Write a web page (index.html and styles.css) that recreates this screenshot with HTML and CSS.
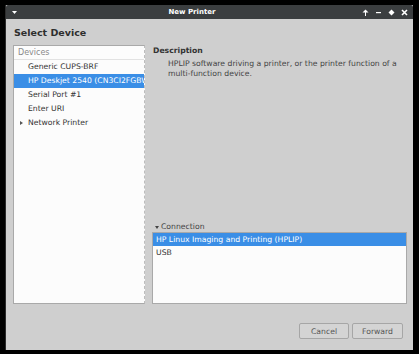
FILE: index.html
```html
<!DOCTYPE html>
<html lang="en">
<head>
<meta charset="UTF-8" />
<title>New Printer</title>
<link rel="stylesheet" href="styles.css">
</head>
<body>
<div class="window">
  <div class="titlebar">
    <span class="menu-btn">
      <svg width="5" height="3" viewBox="0 0 5 3"><path d="M0 0h5L2.5 3z" fill="#fff"/></svg>
    </span>
    <span class="title">New Printer</span>
    <span class="win-btns">
      <svg width="7" height="7" viewBox="0 0 7 7"><path d="M0.5 3.5L3.5 0.5L6.5 3.5z" fill="#fff"/><rect x="3" y="3" width="1" height="4" fill="#fff"/></svg>
      <svg width="7" height="7" viewBox="0 0 7 7"><rect x="1" y="3" width="5" height="1.2" fill="#fff"/></svg>
      <svg width="7" height="7" viewBox="0 0 7 7"><path d="M3.5 0.5L6.5 3.5L3.5 6.5L0.5 3.5z" fill="#fff"/></svg>
      <svg width="7" height="7" viewBox="0 0 7 7"><path d="M1 1L6 6M6 1L1 6" stroke="#fff" stroke-width="1.6"/></svg>
    </span>
  </div>

  <div class="content">
    <h1 class="heading">Select Device</h1>

    <div class="main">
      <div class="devices">
        <div class="devices-head">Devices</div>
        <div class="row">Generic CUPS-BRF</div>
        <div class="row selected">HP Deskjet 2540 (CN3CI2FGBW)</div>
        <div class="row">Serial Port #1</div>
        <div class="row">Enter URI</div>
        <div class="row"><span class="arrow-right"></span>Network Printer</div>
      </div>

      <div class="details">
        <div class="desc-title">Description</div>
        <p class="desc">HPLIP software driving a printer, or the printer function of a multi-function device.</p>
        <div class="spacer"></div>
        <div class="conn-label"><span class="arrow-down"></span>Connection</div>
        <div class="conn-list">
          <div class="row selected">HP Linux Imaging and Printing (HPLIP)</div>
          <div class="row">USB</div>
        </div>
      </div>
    </div>

    <div class="buttons">
      <button class="btn cancel">Cancel</button>
      <button class="btn forward">Forward</button>
    </div>
  </div>
</div>
</body>
</html>
```

FILE: styles.css
```css
* {
  box-sizing: border-box;
}
body {
  margin: 0;
  background: #000;
  font-family: "DejaVu Sans", sans-serif;
  font-size: 7.7px;
  color: #333;
}
.window {
  margin: 5px 0 0 5px;
  width: 408px;
  height: 345px;
  background: #cfcfcf;
  border-left: 1px solid #2c2c2c;
  display: flex;
  flex-direction: column;
}
.titlebar {
  height: 14px;
  background: #3b3e40;
  color: #fff;
  font-size: 7px;
  font-weight: 700;
  display: flex;
  align-items: center;
  padding: 0 5px 0 6px;
  border-radius: 2px 2px 0 0;
}
.menu-btn {
  display: flex;
  width: 10px;
}
.title {
  flex: 1;
  text-align: center;
}
.win-btns {
  display: flex;
  gap: 6px;
  align-items: center;
}
.win-btns svg {
  display: block;
}
.content {
  flex: 1;
  padding: 0 6px 0 7px;
  display: flex;
  flex-direction: column;
}
.heading {
  margin: 8px 0 6px 1px;
  font-size: 9.5px;
  line-height: 12px;
  font-weight: 700;
  color: #2e2e2e;
}
.main {
  height: 259px;
  display: flex;
  gap: 7px;
}
.devices {
  width: 132px;
  background: #fcfcfc;
  border: 1px solid #a9a9a9;
  border-right: 1px dashed #bdbdbd;
  overflow: hidden;
}
.devices-head {
  height: 14px;
  line-height: 13px;
  padding-left: 4px;
  color: #8a8a8a;
  border-bottom: 1px solid #e2e2e2;
  font-size: 8px;
}
.row {
  height: 14px;
  line-height: 14px;
  padding-left: 14px;
  white-space: nowrap;
  color: #333;
  position: relative;
}
.row.selected {
  background: #3a8ee6;
  color: #fff;
}
.arrow-right {
  position: absolute;
  left: 6px;
  top: 5px;
  border-left: 3px solid #555;
  border-top: 2.5px solid transparent;
  border-bottom: 2.5px solid transparent;
}
.details {
  flex: 1;
  display: flex;
  flex-direction: column;
}
.desc-title {
  height: 12px;
  line-height: 12px;
  font-weight: 700;
  padding-left: 1px;
  color: #333;
}
.desc {
  margin: 2px 0 0;
  padding-left: 16px;
  line-height: 10px;
  color: #444;
}
.spacer {
  flex: 1;
}
.conn-label {
  height: 10px;
  line-height: 10px;
  padding-left: 3px;
  color: #444;
  display: flex;
  align-items: center;
  gap: 2px;
}
.arrow-down {
  border-top: 3px solid #444;
  border-left: 2.5px solid transparent;
  border-right: 2.5px solid transparent;
}
.conn-list {
  height: 72px;
  background: #fcfcfc;
  border: 1px solid #a9a9a9;
}
.conn-list .row {
  padding-left: 3px;
  height: 13px;
  line-height: 13px;
}
.conn-list .row + .row {
  height: 14px;
  line-height: 14px;
}
.buttons {
  display: flex;
  justify-content: flex-end;
  gap: 3px;
  padding: 19px 4px 0 0;
}
.btn {
  height: 16px;
  padding: 0;
  font-family: inherit;
  font-size: 7.7px;
  color: #555;
  background: #d4d4d4;
  border: 1px solid #a6a6a6;
  border-radius: 2px;
}
.cancel {
  width: 50px;
}
.forward {
  width: 51px;
}
```
